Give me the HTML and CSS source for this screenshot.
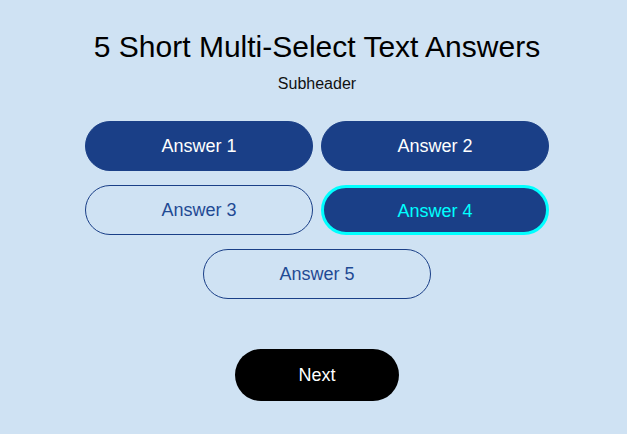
FILE: index.html
```html
<!DOCTYPE html>
<html lang="en">

<head>
    <meta charset="UTF-8">
    <meta name="viewport" content="width=device-width, initial-scale=1.0">
    <title>5 Short Multi-Select Text Answers</title>
    <link rel="stylesheet" href="styles.css">
</head>

<body>
    <div class="page">
        <h1 class="title">5 Short Multi-Select Text Answers</h1>
        <p class="subheader">Subheader</p>
        <div class="answers">
            <button class="answer selected" type="button">Answer 1</button>
            <button class="answer selected" type="button">Answer 2</button>
            <button class="answer" type="button">Answer 3</button>
            <button class="answer selected focused" type="button">Answer 4</button>
            <button class="answer" type="button">Answer 5</button>
        </div>
        <button class="next" type="button">Next</button>
    </div>
</body>
</html>
```

FILE: styles.css
```css
* {
    padding: 0;
    margin: 0;
    box-sizing: border-box;
}
body {
    font-family: "Liberation Sans", Arial, sans-serif;
    background: #cfe2f3;
    min-height: 100vh;
}
.page {
    display: flex;
    flex-direction: column;
    align-items: center;
    padding: 29px 0 0 7px;
}
.title {
    font-size: 30px;
    font-weight: normal;
    color: #000;
    line-height: 36px;
}
.subheader {
    font-size: 16px;
    color: #111;
    margin-top: 9px;
    line-height: 20px;
}
.answers {
    display: flex;
    flex-wrap: wrap;
    justify-content: center;
    gap: 14px 8px;
    width: 464px;
    margin-top: 27px;
}
.answer {
    width: 228px;
    height: 50px;
    border-radius: 25px;
    border: 1px solid #1a3f87;
    background: transparent;
    color: #1f4a94;
    font-family: inherit;
    font-size: 18px;
    line-height: 46px;
}
.answer.selected {
    background: #1a3f87;
    color: #fff;
}
.answer.focused {
    border: 3px solid #00ffff;
    color: #00ffff;
}
.next {
    margin-top: 50px;
    width: 164px;
    height: 52px;
    border-radius: 26px;
    border: none;
    background: #000;
    color: #fff;
    font-family: inherit;
    font-size: 18px;
}
```
